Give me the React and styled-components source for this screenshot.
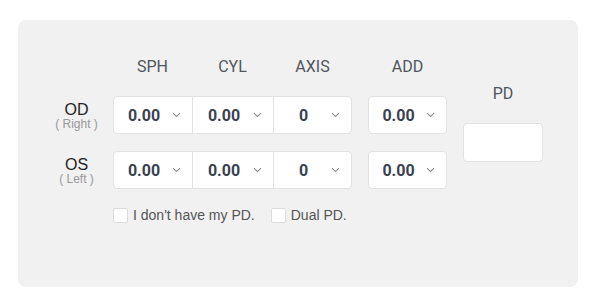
import styled, { createGlobalStyle } from 'styled-components'

const GlobalStyle = createGlobalStyle`
  body {
    margin: 0;
    background: #fff;
    font-family: "Liberation Sans", Arial, sans-serif;
  }
`

const Page = styled.div`
  padding: 20px 17px 20px 18px;
`

const Panel = styled.div`
  box-sizing: border-box;
  height: 267px;
  background: #f1f1f1;
  border-radius: 8px;
  padding: 37px 0 0 22px;
  display: flex;
  align-items: flex-start;
`

const Table = styled.div`
  display: flex;
  flex-direction: column;
`

const HeadRow = styled.div`
  display: flex;
  height: 20px;
  margin-bottom: 19px;
`

const Head = styled.div`
  width: ${p => p.w}px;
  margin-left: ${p => p.gap || 0}px;
  text-align: center;
  font-family: Roboto, sans-serif;
  font-size: 16px;
  line-height: 20px;
  color: #50555b;
`

const Row = styled.div`
  display: flex;
  height: 38px;
  margin-bottom: 17px;
`

const EyeLabel = styled.div`
  box-sizing: border-box;
  width: 73px;
  padding-top: 2px;
  display: flex;
  flex-direction: column;
  align-items: center;
  justify-content: center;
  line-height: 1;
`

const EyeName = styled.span`
  font-family: "Liberation Sans", Arial, sans-serif;
  font-size: 16px;
  color: #222;
`

const EyeSide = styled.span`
  font-family: "Liberation Sans", Arial, sans-serif;
  font-size: 12px;
  color: #999;
`

const Box = styled.div`
  box-sizing: border-box;
  display: flex;
  background: #fff;
  border: 1px solid #e2e2e2;
  border-radius: 4px;
  margin-left: ${p => p.gap || 0}px;
`

const Cell = styled.div`
  box-sizing: border-box;
  width: ${p => p.w}px;
  display: flex;
  align-items: center;
  padding: 0 11px 0 2px;
  border-left: ${p => (p.divider ? '1px solid #e2e2e2' : 'none')};
`

const Value = styled.span`
  flex: 1;
  text-align: center;
  font-family: Roboto, sans-serif;
  font-weight: 700;
  font-size: 16px;
  color: #3a4250;
`

const Chevron = () => (
  <svg width="9" height="6" viewBox="0 0 9 6">
    <path d="M1 1.2l3.5 3.3L8 1.2" fill="none" stroke="#8d8d8d" strokeWidth="1.1" />
  </svg>
)

const PdColumn = styled.div`
  margin: 27px 0 0 16px;
  display: flex;
  flex-direction: column;
  align-items: center;
`

const PdLabel = styled.div`
  font-family: Roboto, sans-serif;
  font-size: 16px;
  line-height: 20px;
  color: #50555b;
  margin-bottom: 19px;
`

const PdInput = styled.input`
  box-sizing: border-box;
  width: 80px;
  height: 39px;
  border: 1px solid #e2e2e2;
  border-radius: 4px;
  background: #fff;
  outline: none;
`

const Options = styled.div`
  display: flex;
  align-items: center;
  margin: 1px 0 0 73px;
`

const Check = styled.label`
  display: flex;
  align-items: center;
  gap: 5px;
  margin-right: 16px;
  font-size: 14px;
  color: #555;
`

const CheckBox = styled.span`
  box-sizing: border-box;
  width: 15px;
  height: 15px;
  background: #fff;
  border: 1px solid #dcdcdc;
  border-radius: 2px;
`

const eyes = [
  { name: 'OD', side: '( Right )' },
  { name: 'OS', side: '( Left )' },
]

function App() {
  return (
    <>
      <GlobalStyle />
      <Page>
        <Panel>
          <Table>
            <HeadRow>
              <Head w={73} />
              <Head w={79}>SPH</Head>
              <Head w={81}>CYL</Head>
              <Head w={79}>AXIS</Head>
              <Head w={79} gap={16}>ADD</Head>
            </HeadRow>
            {eyes.map(eye => (
              <Row key={eye.name}>
                <EyeLabel>
                  <EyeName>{eye.name}</EyeName>
                  <EyeSide>{eye.side}</EyeSide>
                </EyeLabel>
                <Box>
                  <Cell w={78}><Value>0.00</Value><Chevron /></Cell>
                  <Cell w={81} divider><Value>0.00</Value><Chevron /></Cell>
                  <Cell w={78} divider><Value>0</Value><Chevron /></Cell>
                </Box>
                <Box gap={16}>
                  <Cell w={77}><Value>0.00</Value><Chevron /></Cell>
                </Box>
              </Row>
            ))}
            <Options>
              <Check><CheckBox />I don't have my PD.</Check>
              <Check><CheckBox />Dual PD.</Check>
            </Options>
          </Table>
          <PdColumn>
            <PdLabel>PD</PdLabel>
            <PdInput />
          </PdColumn>
        </Panel>
      </Page>
    </>
  )
}

export default App
